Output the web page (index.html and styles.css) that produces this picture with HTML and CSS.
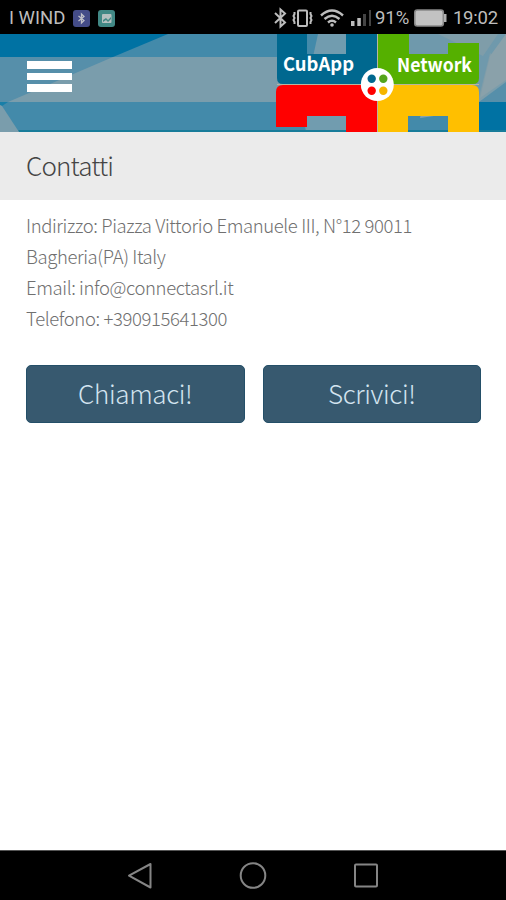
FILE: index.html
```html
<!DOCTYPE html>
<html lang="it">
<head>
<meta charset="utf-8">
<title>Contatti</title>
<link rel="stylesheet" href="styles.css">
</head>
<body>
<div class="status">
  <div class="status-left">
    <span class="carrier">I WIND</span>
    <svg class="badge" viewBox="0 0 17 17"><rect width="17" height="17" rx="3" fill="#444c88"/><path d="M5.500 6l5.500 4.500-2.500 2.500V4l2.500 2.500L5.500 11" fill="none" stroke="#bfc0c8" stroke-width="1.300"/></svg>
    <svg class="badge" viewBox="0 0 17 17"><rect width="17" height="17" rx="3" fill="#418885"/><rect x="4" y="4" width="9.500" height="9" rx="1" fill="#b6c0c0"/><path d="M5 10l3-2 2 2 3-3v2l-3 3-2-2-3 2z" fill="#418885"/></svg>
  </div>
  <div class="status-right">
    <svg class="indicators" viewBox="0 0 100 34" fill="none" stroke="#bdbdbd" stroke-width="2">
      <path d="M4 13l10 9.500-4.500 4V9.500l4.500 4L4 23"/>
      <rect x="27" y="10.500" width="9" height="15.500" rx="1"/>
      <path d="M23.500 12v2l-1 2 1 2-1 2 1 2v2M39.500 12v2l1 2-1 2 1 2-1 2v2" stroke-width="2"/>
      <path d="M50 15.500q11-10 22 0M53.500 19q7.500-6.500 15 0M57 22.500q4-3.500 8 0" stroke-width="2.400"/>
      <circle cx="61" cy="25" r="1.800" fill="#bdbdbd" stroke="none"/>
      <g stroke="none"><path d="M80 21h3.500v5H80zM86.300 18h3.500v8h-3.500z" fill="#bdbdbd"/><path d="M92 14h3v12h-3zM98 10h2v16h-2z" fill="#444"/></g>
    </svg>
    <span class="percent">91%</span>
    <svg class="battery" viewBox="0 0 33 18"><rect x=".8" y="1" width="28.500" height="16" rx="2.500" fill="#c2c2c2" stroke="#888" stroke-width="1.600"/><path d="M30 5h2.500v8H30z" fill="#b0b0b0"/></svg>
    <span class="clock">19:02</span>
  </div>
</div>
<header class="header">
  <svg class="art" viewBox="0 34 506 98">
    <rect y="34" width="506" height="98" fill="#438aaa"/>
    <path d="M0 34h168L113 57H0z" fill="#0072a3"/>
    <rect y="57" width="506" height="45" fill="#7a9dac"/>
    <path d="M0 57h113L8 102H0z" fill="#568faa"/>
    <path d="M0 102h8l-6 4-2-1z" fill="#187fa8"/>
    <path d="M0 105l2 1 17 26H0z" fill="#7a9dac"/>
    <path d="M318 34h70v98h-82l-4-25z" fill="#719caf"/>
    <path d="M440 34h66v23l-12 21-10 26h-90V34z" fill="#7f9da9"/>
    <path d="M400 34h38l45 22 15-22h8v30L490 53l-12 48-78-10z" fill="#6f99ac"/>
    <path d="M490 56l16-22v46l-26 18z" fill="#8aa1aa"/>
    <path d="M479 102l27-20v20z" fill="#568faa"/>
    <path d="M479 102h27v30h-27z" fill="#0072a3"/>
    <path d="M400 109l20 9 27-4v18h-47z" fill="#438aaa"/>
    <path d="M424 102h24v12l-28 4z" fill="#87a3ad"/>
    <path d="M0 130h506v2H0z" fill="#187c9a"/>
    <path d="M0 130h18l1 2H0z" fill="#7a9dac"/>
    <path d="M277 34h30v20h39V34h31v50h-94q-6 0-6-6z" fill="#00688f"/>
    <path d="M378 34h31v20h39V43h31v35q0 6-6 6h-95z" fill="#55b000"/>
    <path d="M283 85h94v47h-31v-16h-39v11h-31V92q0-7 7-7z" fill="#f00"/>
    <path d="M378 85h94q7 0 7 7v40h-31v-16h-40v16h-30z" fill="#ffbf00"/>
    <path d="M277 84.500h202M377.500 34v98" stroke="#b7b5a0" stroke-width="1"/>
    <circle cx="377.300" cy="84.500" r="16.500" fill="#fff"/>
    <circle cx="371.700" cy="78.700" r="4.200" fill="#00688f"/><circle cx="383.300" cy="78.700" r="4.200" fill="#55a51c"/>
    <circle cx="371.700" cy="90.800" r="4.200" fill="#f00"/><circle cx="383.300" cy="90.800" r="4.200" fill="#f5b500"/>
    <text class="logo-text" x="283" y="70.500" textLength="71" lengthAdjust="spacingAndGlyphs">CubApp</text>
    <text class="logo-text" x="397" y="71.500" textLength="75" lengthAdjust="spacingAndGlyphs">Network</text>
  </svg>
  <div class="menu"><span></span><span></span><span></span></div>
</header>
<h1 class="title">Contatti</h1>
<main class="content">
  <div class="info">
    <p>Indirizzo: Piazza Vittorio Emanuele III, N°12 90011</p>
    <p>Bagheria(PA) Italy</p>
    <p>Email: info@connectasrl.it</p>
    <p>Telefono: +390915641300</p>
  </div>
  <div class="actions"><a class="button">Chiamaci!</a><a class="button">Scrivici!</a></div>
</main>
<nav class="nav">
  <svg viewBox="0 0 28 28"><path d="M24.500 2v23.500L3 13.700z"/></svg>
  <svg viewBox="0 0 28 28"><circle cx="14" cy="13.500" r="12.300"/></svg>
  <svg viewBox="0 0 28 28"><rect x="3" y="2.500" width="22" height="22" rx="1"/></svg>
</nav>
</body>
</html>
```
FILE: styles.css
```css
* { box-sizing: border-box; }
body {
  margin: 0;
  width: 506px;
  height: 900px;
  display: flex;
  flex-direction: column;
  background: #fff;
  overflow: hidden;
  font-family: "Noto Sans CJK JP", "Noto Sans", sans-serif;
  font-weight: 300;
}
svg { display: block; flex: none; }
.status {
  height: 34px;
  flex: none;
  background: #000;
  color: #bdbdbd;
  display: flex;
  justify-content: space-between;
  align-items: center;
  padding: 2px 8px 0 9px;
  font: 400 19px/32px Roboto, sans-serif;
}
.status-left, .status-right { display: flex; align-items: center; height: 32px; }
.carrier { width: 64px; font-size: 18.500px; white-space: nowrap; }
.badge { width: 17px; height: 17px; }
.badge + .badge { margin-left: 8px; }
.indicators { width: 100px; height: 34px; margin-right: 4px; margin-top: -2px; }
.percent { width: 39px; font-size: 18.500px; }
.battery { width: 33px; height: 18px; }
.clock { margin-left: 6px; font-size: 18.500px; letter-spacing: -.2px; }
.header { height: 98px; flex: none; position: relative; }
.art { position: absolute; inset: 0; width: 506px; height: 98px; }
.logo-text { font: 700 19px "Noto Sans CJK JP", sans-serif; fill: #fff; }
.menu {
  position: relative;
  display: flex;
  flex-direction: column;
  gap: 4px;
  padding: 27px 0 0 27px;
}
.menu span { width: 45px; height: 7.500px; background: #fff; }
.title {
  margin: 0;
  height: 68px;
  flex: none;
  padding-left: 26px;
  background: #ebebeb;
  color: #444;
  font-size: 26px;
  font-weight: 300;
  line-height: 66px;
  letter-spacing: -.85px;
}
.content { flex: 1; padding: 10px 25px 0 26px; }
.info { color: #707070; font-size: 18.500px; line-height: 31px; letter-spacing: -.39px; white-space: nowrap; }
.info p { margin: 0; }
.actions { display: flex; gap: 18px; margin-top: 31px; }
.button {
  flex: 1;
  height: 58px;
  border-radius: 5px;
  background: #37596f;
  border: 1px solid #244f68;
  color: #d3e4f0;
  text-align: center;
  font-size: 26px;
  line-height: 53px;
  letter-spacing: -.35px;
}
.nav {
  height: 50px;
  flex: none;
  background: #000;
  border-top: 1px solid #555;
  display: flex;
  justify-content: center;
  align-items: center;
  gap: 85px;
}
.nav svg { width: 28px; height: 28px; fill: none; stroke: #858585; stroke-width: 2; stroke-linejoin: round; }
```
